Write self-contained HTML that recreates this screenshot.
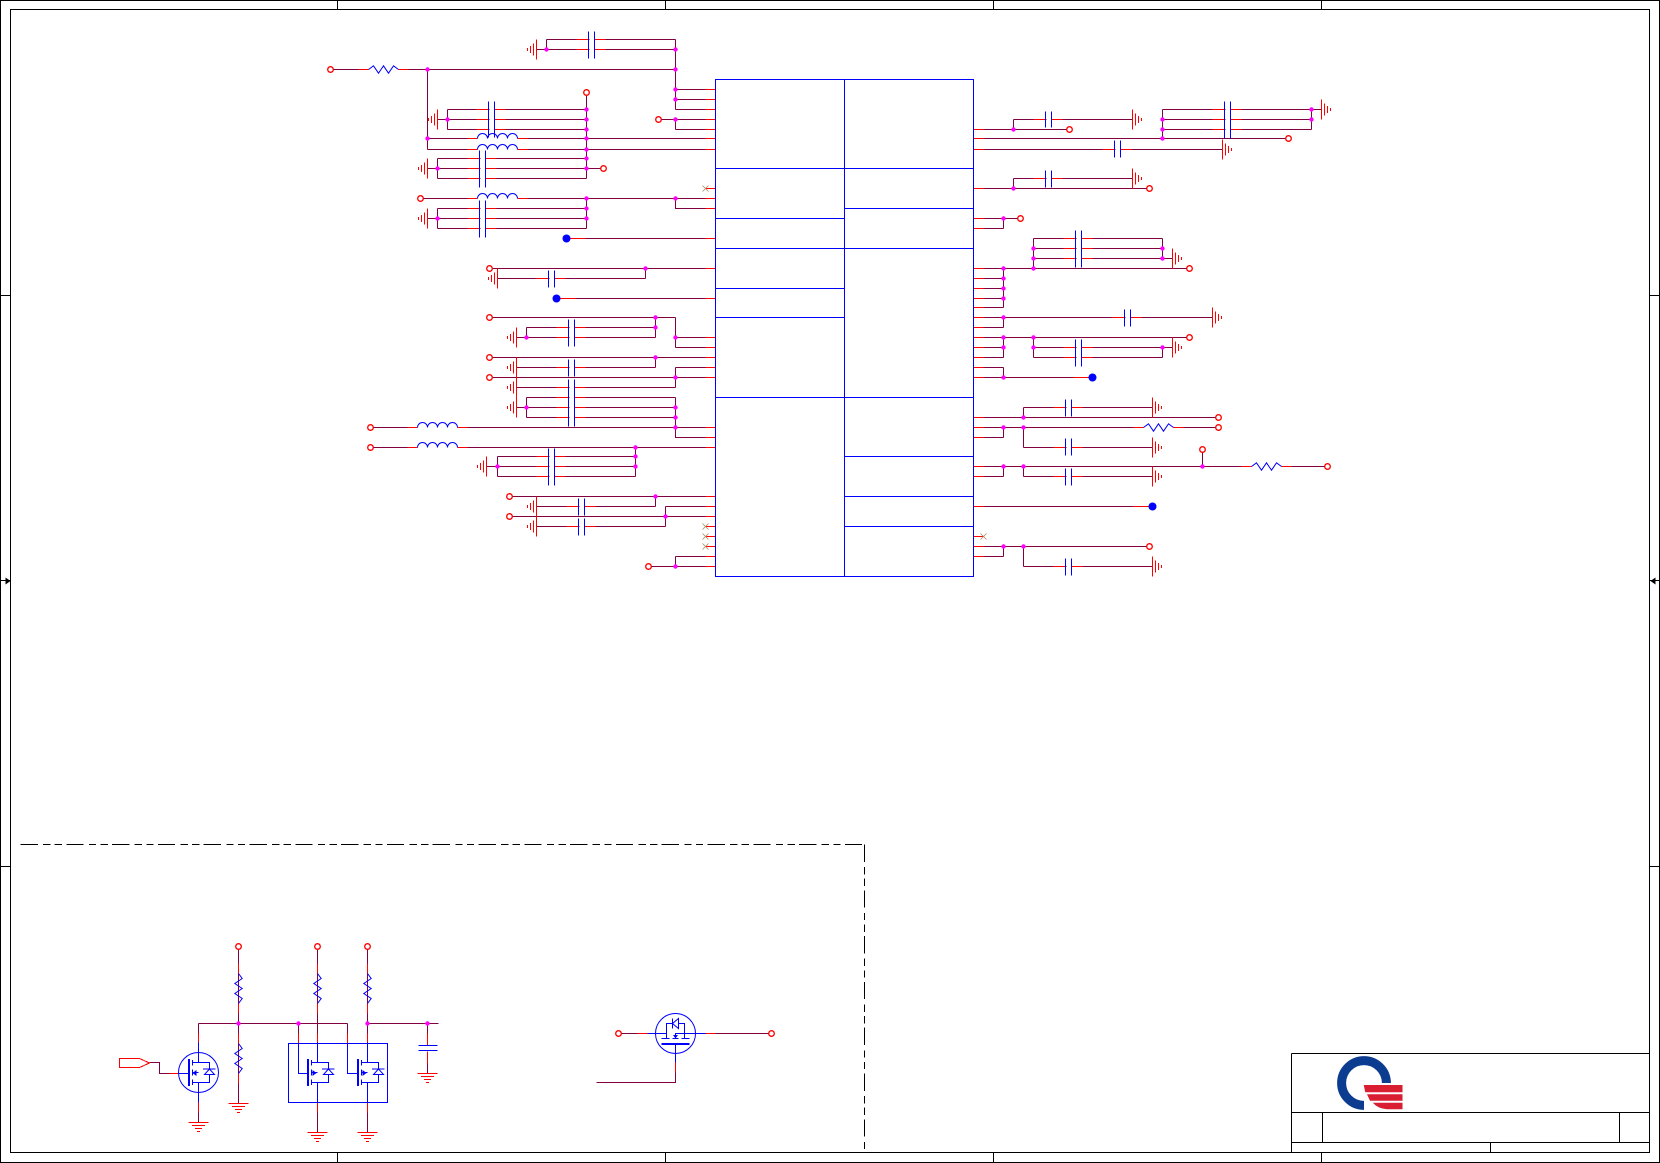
<!DOCTYPE html>
<html lang="en">
<head>
<meta charset="utf-8">
<title>Schematic</title>
<style>
html,body{margin:0;padding:0;background:#fff}
svg{display:block}
.k{fill:none;stroke:#000;stroke-width:1;shape-rendering:crispEdges}
.w{fill:none;stroke:#800040;stroke-width:1;shape-rendering:crispEdges}
.r{fill:none;stroke:#f00;stroke-width:1;shape-rendering:crispEdges}
.b{fill:none;stroke:#00f;stroke-width:1;shape-rendering:crispEdges}
.z{fill:none;stroke:#00f;stroke-width:1}
.x{fill:none;stroke:#b08a60;stroke-width:.8}
.p{fill:#fff;stroke:#f00;stroke-width:1.3}
.j{fill:#f0f}
.d{fill:#00f}
</style>
</head>
<body>
<svg xmlns="http://www.w3.org/2000/svg" width="1660" height="1163" viewBox="0 0 1660 1163">
<defs>
<path id="gl" class="r" d="M0-10V10M-3-6V6M-6-3.5V3.5M-9-1.5V1.5"/>
<path id="gr" class="r" d="M0-10V10M3-6V6M6-3.5V3.5M9-1.5V1.5"/>
<path id="gd" class="r" d="M-10 0H10M-6.5 3H6.5M-3.5 6H3.5M-1.5 9H1.5"/>
<path id="cs" class="r" d="M-12 0H0M6 0H17"/>
<circle id="o" class="p" r="2.8"/>
<circle id="n" class="j" r="2.2"/>
<circle id="bd" class="d" r="4"/>
<path id="xm" class="x" d="M-3-3L3 3M-3 3L3-3"/>
<path id="ind" class="z" d="M0 0a5 5 0 0 1 10 0a5 5 0 0 1 10 0a5 5 0 0 1 10 0a5 5 0 0 1 10 0"/>
<path id="rh" class="z" d="M0 0l5-3.7 5 7.4 5-7.4 5 7.4 5-7.4 5 3.7"/>
<path id="rv" class="z" d="M0 0l3.7 5-7.4 5 7.4 5-7.4 5 7.4 5-3.7 5"/>
<g id="mos">
<path class="b" d="M-6-12.5V-7M-6-3V3M-6 7V12.5M-6-10H0V-30M-6 10H0V30M-6 0H0M0-10H11V-3.5M11 2V10H0M4.5-3.5H17"/>
<path class="b" style="stroke-width:2" d="M-9.5-13.5V13.5"/>
<path class="z" d="M11-3.5L6 2H16Z"/>
</g>
</defs>

<g transform="translate(.5 .5)">
<!-- frame -->
<path class="k" d="M0 0H1659V1162H0ZM10 9H1649V1152H10Z"/>
<path class="k" d="M337 0V9M665 0V9M993 0V9M1321 0V9M337 1152V1162M665 1152V1162M993 1152V1162M1321 1152V1162M0 295H10M0 866H10M1649 295H1659M1649 866H1659M0 580H10M1649 580H1659"/>
<path d="M5 577L10 580.5L5 584ZM1655 577L1650 580.5L1655 584Z" fill="#000"/>
<!-- title block -->
<path class="k" d="M1291 1053H1649M1291 1053V1152M1291 1112H1649M1291 1142H1649M1322 1112V1142M1619 1112V1142M1490 1142V1152"/>
<!-- dashed box -->
<path class="k" stroke-dasharray="17.3 5.3 7.3 4.3 7.3 4.3" d="M20 844H864"/>
<path class="k" stroke-dasharray="17.3 5.3 7.3 4.3 7.3 4.3" d="M864 844V1152"/>

<!-- wires -->
<path class="w" d="M546 39V49M546 39H675M536 49H675M675 39V109M675 89H715M675 99H715M675 109H715M660 119H715M675 119V129M675 129H715
M333 69H368M398 69H675M427 69V149M427 138H477M517 138H715M427 149H477M517 149H715
M447 109V129M447 109H586M437 119H586M447 129H586M586 92V178M586 198V228
M437 158V178M437 158H586M427 168H601M437 178H586
M423 198H477M517 198H715M675 198V208H715
M437 208V228M437 208H586M427 218H586M437 228H586
M566 238H715M492 268H715M645 268V278M497 278H645M556 298H715
M492 317H675M675 317V347M675 337H715M675 347H715M526 327V337M526 327H655M516 337H655M655 317V337
M492 357H715M655 357V367M516 367H655
M492 377H715M675 367H715M675 367V387M516 387H675
M526 397V417M526 397H675M516 407H675M526 417H675M675 397V437H715
M373 427H417M457 427H715M373 447H417M457 447H715
M635 447V476M497 456V476M497 456H635M486 466H635M497 476H635
M512 496H715M655 496V506M536 506H655M512 516H715M665 506H715M665 506V526M536 526H665
M675 556H715M675 556V566M651 566H715

M973 129H1067M1013 119V129M1013 119H1132M973 138H1286M1162 109V138M1162 109H1311M1162 119H1311M1162 129H1311M1311 109V129M1311 109H1321
M973 149H1222M973 188H1146M1013 178V188M1013 178H1132
M973 218H1017M973 228H1003M1003 218V228
M973 268H1186M1003 268V307M973 278H1003M973 288H1003M973 298H1003M973 307H1003
M1033 238V268M1033 238H1162M1033 248H1162M1033 258H1172M1162 238V258
M973 317H1212M1003 317V327M973 327H1003
M973 337H1186M1003 337V357M973 347H1003M973 357H1003M1033 337V357M1033 347H1172M1033 357H1162M1162 347V357
M973 367H1003M1003 367V377M973 377H1092
M1023 407V417M1023 407H1152M973 417H1216
M973 427H1143M1173 427H1216M1003 427V437M973 437H1003M1023 427V447M1023 447H1152
M973 466H1251M1281 466H1325M1202 452V466M1003 466V476M973 476H1003M1023 466V476M1023 476H1152
M973 506H1152M973 546H1146M1003 546V556M973 556H1003M1023 546V566M1023 566H1152

M238 949V1103M317 949V1132M367 949V1132M198 1023H347M367 1023H438M198 1023V1043M298 1023V1043M347 1023V1043M427 1023V1045M427 1051V1073
M198 1102V1122M149 1062H159V1073H178
M621 1033H655M695 1033H769M675 1053V1082H596"/>

<!-- white gaps: between capacitor plates -->
<g fill="#fff" shape-rendering="crispEdges">
<rect x="589" y="31" width="5" height="27"/><rect x="489" y="101" width="5" height="35"/><rect x="480" y="150" width="5" height="37"/><rect x="480" y="200" width="5" height="37"/>
<rect x="549" y="270" width="5" height="17"/><rect x="569" y="319" width="5" height="27"/><rect x="569" y="359" width="5" height="17"/><rect x="569" y="379" width="5" height="47"/>
<rect x="549" y="448" width="5" height="37"/><rect x="579" y="498" width="5" height="17"/><rect x="579" y="518" width="5" height="17"/>
<rect x="1046" y="111" width="5" height="16"/><rect x="1225" y="101" width="5" height="35"/><rect x="1115" y="140" width="5" height="17"/><rect x="1046" y="170" width="5" height="17"/>
<rect x="1076" y="230" width="5" height="37"/><rect x="1125" y="309" width="5" height="17"/><rect x="1076" y="339" width="5" height="27"/><rect x="1066" y="399" width="5" height="17"/>
<rect x="1066" y="438" width="5" height="17"/><rect x="1066" y="468" width="5" height="17"/><rect x="1066" y="558" width="5" height="17"/>
<!-- bodies of mosfets / box -->
<rect x="180" y="1053" width="37" height="39"/>
<rect x="289" y="1044" width="97" height="57"/>
<rect x="657" y="1014" width="37" height="39"/>
</g>

<!-- red pin stubs -->
<path class="r" d="M705 89H715M705 99H715M705 109H715M705 119H715M705 129H715M705 138H715M705 149H715M705 188H715M705 198H715M705 208H715M705 238H715M705 268H715M705 298H715M705 337H715M705 347H715M705 357H715M705 367H715M705 377H715M705 427H715M705 437H715M705 447H715M705 496H715M705 506H715M705 516H715M705 526H715M705 536H715M705 546H715M705 556H715M705 566H715
M973 129H983M973 138H983M973 149H983M973 188H983M973 218H983M973 228H983M973 268H983M973 278H983M973 288H983M973 298H983M973 307H983M973 317H983M973 327H983M973 337H983M973 347H983M973 357H983M973 367H983M973 377H983M973 417H983M973 427H983M973 437H983M973 466H983M973 476H983M973 506H983M973 536H983M973 546H983M973 556H983
M358 69H368M398 69H408M467 138H477M517 138H527M467 149H477M517 149H527M467 198H477M517 198H527M407 427H417M457 427H467M407 447H417M457 447H467
M1133 427H1143M1173 427H1183M1241 466H1251M1281 466H1291
M570 238H585M560 298H575M1073 377H1088M1133 506H1148
M238 963V973M238 1003V1013M238 1033V1043M238 1073V1083M317 963V973M317 1003V1013M367 963V973M367 1003V1013M317 1033V1042M367 1033V1042M317 1102V1112M367 1102V1112M198 1033V1042M198 1102V1112M298 1033V1043M347 1033V1043M427 1033V1045M427 1051V1063M169 1073H178M637 1033H647M705 1033H715M675 1062V1072
M119 1058H139L149 1062.5L139 1067H119Z"/>

<!-- capacitor red leads -->
<use href="#cs" x="588" y="39"/><use href="#cs" x="588" y="49"/>
<use href="#cs" x="488" y="109"/><use href="#cs" x="488" y="119"/><use href="#cs" x="488" y="129"/>
<use href="#cs" x="479" y="158"/><use href="#cs" x="479" y="168"/><use href="#cs" x="479" y="178"/>
<use href="#cs" x="479" y="208"/><use href="#cs" x="479" y="218"/><use href="#cs" x="479" y="228"/>
<use href="#cs" x="548" y="278"/>
<use href="#cs" x="568" y="327"/><use href="#cs" x="568" y="337"/><use href="#cs" x="568" y="367"/>
<use href="#cs" x="568" y="387"/><use href="#cs" x="568" y="397"/><use href="#cs" x="568" y="407"/><use href="#cs" x="568" y="417"/>
<use href="#cs" x="548" y="456"/><use href="#cs" x="548" y="466"/><use href="#cs" x="548" y="476"/>
<use href="#cs" x="578" y="506"/><use href="#cs" x="578" y="526"/>
<use href="#cs" x="1045" y="119"/>
<use href="#cs" x="1224" y="109"/><use href="#cs" x="1224" y="119"/><use href="#cs" x="1224" y="129"/>
<use href="#cs" x="1114" y="149"/><use href="#cs" x="1045" y="178"/>
<use href="#cs" x="1075" y="238"/><use href="#cs" x="1075" y="248"/><use href="#cs" x="1075" y="258"/>
<use href="#cs" x="1124" y="317"/><use href="#cs" x="1075" y="347"/><use href="#cs" x="1075" y="357"/>
<use href="#cs" x="1065" y="407"/><use href="#cs" x="1065" y="447"/><use href="#cs" x="1065" y="476"/><use href="#cs" x="1065" y="566"/>

<!-- IC blocks -->
<path class="b" d="M715 79H973V576H715ZM844 79V576M715 168H973M715 218H844M715 248H973M715 288H844M715 317H844M715 397H973M844 208H973M844 456H973M844 496H973M844 526H973"/>

<!-- capacitor plates -->
<path class="b" d="M588 31V58M594 31V58M488 101V137M494 101V137M479 150V187M485 150V187M479 200V237M485 200V237M548 270V287M554 270V287M568 319V346M574 319V346M568 359V376M574 359V376M568 379V426M574 379V426M548 448V485M554 448V485M578 498V515M584 498V515M578 518V535M584 518V535
M1045 111V127M1051 111V127M1224 101V138M1230 101V138M1114 140V157M1120 140V157M1045 170V187M1051 170V187M1075 230V267M1081 230V267M1124 309V326M1130 309V326M1075 339V366M1081 339V366M1065 399V416M1071 399V416M1065 438V455M1071 438V455M1065 468V485M1071 468V485M1065 558V575M1071 558V575
M418 1045H437M418 1050H437"/>

<!-- inductors and resistors -->
<use href="#ind" x="477" y="138"/><use href="#ind" x="477" y="149"/><use href="#ind" x="477" y="198"/><use href="#ind" x="417" y="427"/><use href="#ind" x="417" y="447"/>
<use href="#rh" x="368" y="69"/><use href="#rh" x="1143" y="427"/><use href="#rh" x="1251" y="466"/>
<use href="#rv" x="238" y="973"/><use href="#rv" x="238" y="1043"/><use href="#rv" x="317" y="973"/><use href="#rv" x="367" y="973"/>

<!-- grounds -->
<use href="#gl" x="536" y="49"/><use href="#gl" x="437" y="119"/><use href="#gl" x="427" y="168"/><use href="#gl" x="427" y="218"/>
<use href="#gl" x="497" y="278"/><use href="#gl" x="516" y="337"/><use href="#gl" x="516" y="367"/><use href="#gl" x="516" y="387"/><use href="#gl" x="516" y="407"/>
<use href="#gl" x="486" y="466"/><use href="#gl" x="536" y="506"/><use href="#gl" x="536" y="526"/>
<use href="#gr" x="1132" y="119"/><use href="#gr" x="1321" y="109"/><use href="#gr" x="1222" y="149"/><use href="#gr" x="1132" y="178"/><use href="#gr" x="1172" y="258"/>
<use href="#gr" x="1212" y="317"/><use href="#gr" x="1172" y="347"/><use href="#gr" x="1152" y="407"/><use href="#gr" x="1152" y="447"/><use href="#gr" x="1152" y="476"/><use href="#gr" x="1152" y="566"/>
<use href="#gd" x="238" y="1103"/><use href="#gd" x="198" y="1122"/><use href="#gd" x="317" y="1132"/><use href="#gd" x="367" y="1132"/><use href="#gd" x="427" y="1073"/>

<!-- no-connect marks -->
<use href="#xm" x="705" y="188"/><use href="#xm" x="705" y="526"/><use href="#xm" x="705" y="536"/><use href="#xm" x="705" y="546"/><use href="#xm" x="983" y="536"/>

<!-- MOSFETs -->
<circle class="z" cx="198" cy="1072" r="20"/>
<use href="#mos" x="198" y="1072"/>
<path class="b" d="M178 1073H188"/>
<path class="d" d="M192 1072.5L196 1069.5V1075.5Z"/>
<use href="#mos" x="317" y="1072"/><use href="#mos" x="367" y="1072"/>
<path class="b" d="M298 1043V1073H308M347 1043V1073H358"/>
<path class="d" d="M316 1072.5L312 1069.5V1075.5ZM366 1072.5L362 1069.5V1075.5Z"/>
<path class="b" d="M288 1043H387V1102H288Z"/>

<circle class="z" cx="675" cy="1033" r="20"/>
<path class="b" d="M647 1033H666M684 1033H705M661 1038H669M672 1038H678M681 1038H689M666 1033V1038M684 1033V1038M666 1033V1023H672M684 1033V1023H678M675 1038V1033H684M675 1044V1062"/>
<path class="b" style="stroke-width:2" d="M661 1043.5H689"/>
<path class="z" d="M672 1018V1028M672 1023L678 1018V1028Z"/>
<path class="d" d="M675 1038L672.5 1034.5H677.5Z"/>

<!-- junctions -->
<use href="#n" x="546" y="49"/><use href="#n" x="675" y="49"/><use href="#n" x="675" y="69"/><use href="#n" x="675" y="89"/><use href="#n" x="675" y="99"/><use href="#n" x="675" y="119"/>
<use href="#n" x="427" y="69"/><use href="#n" x="427" y="138"/>
<use href="#n" x="447" y="119"/><use href="#n" x="586" y="109"/><use href="#n" x="586" y="119"/><use href="#n" x="586" y="129"/><use href="#n" x="586" y="138"/><use href="#n" x="586" y="149"/><use href="#n" x="586" y="158"/><use href="#n" x="586" y="168"/>
<use href="#n" x="437" y="168"/><use href="#n" x="586" y="198"/><use href="#n" x="586" y="208"/><use href="#n" x="586" y="218"/><use href="#n" x="437" y="218"/><use href="#n" x="675" y="198"/><use href="#n" x="645" y="268"/>
<use href="#n" x="655" y="317"/><use href="#n" x="655" y="327"/><use href="#n" x="526" y="337"/><use href="#n" x="675" y="337"/><use href="#n" x="655" y="357"/><use href="#n" x="675" y="377"/>
<use href="#n" x="526" y="407"/><use href="#n" x="675" y="407"/><use href="#n" x="675" y="417"/><use href="#n" x="675" y="427"/>
<use href="#n" x="635" y="447"/><use href="#n" x="635" y="456"/><use href="#n" x="635" y="466"/><use href="#n" x="497" y="466"/>
<use href="#n" x="655" y="496"/><use href="#n" x="665" y="516"/><use href="#n" x="675" y="566"/>
<use href="#n" x="1013" y="129"/><use href="#n" x="1162" y="119"/><use href="#n" x="1162" y="129"/><use href="#n" x="1162" y="138"/><use href="#n" x="1311" y="109"/><use href="#n" x="1311" y="119"/><use href="#n" x="1013" y="188"/><use href="#n" x="1003" y="218"/>
<use href="#n" x="1003" y="268"/><use href="#n" x="1033" y="268"/><use href="#n" x="1003" y="278"/><use href="#n" x="1003" y="288"/><use href="#n" x="1003" y="298"/><use href="#n" x="1033" y="248"/><use href="#n" x="1033" y="258"/><use href="#n" x="1162" y="248"/><use href="#n" x="1162" y="258"/>
<use href="#n" x="1003" y="317"/><use href="#n" x="1003" y="337"/><use href="#n" x="1033" y="337"/><use href="#n" x="1003" y="347"/><use href="#n" x="1033" y="347"/><use href="#n" x="1162" y="347"/><use href="#n" x="1003" y="377"/>
<use href="#n" x="1023" y="417"/><use href="#n" x="1003" y="427"/><use href="#n" x="1023" y="427"/><use href="#n" x="1003" y="466"/><use href="#n" x="1023" y="466"/><use href="#n" x="1202" y="466"/><use href="#n" x="1003" y="546"/><use href="#n" x="1023" y="546"/>
<use href="#n" x="238" y="1023"/><use href="#n" x="298" y="1023"/><use href="#n" x="367" y="1023"/><use href="#n" x="427" y="1023"/>

<!-- ports -->
<use href="#o" x="330" y="69"/><use href="#o" x="586" y="92"/><use href="#o" x="658" y="119"/><use href="#o" x="603" y="168"/><use href="#o" x="420" y="198"/><use href="#o" x="489" y="268"/>
<use href="#o" x="489" y="317"/><use href="#o" x="489" y="357"/><use href="#o" x="489" y="377"/><use href="#o" x="370" y="427"/><use href="#o" x="370" y="447"/><use href="#o" x="509" y="496"/><use href="#o" x="509" y="516"/><use href="#o" x="648" y="566"/>
<use href="#o" x="1069" y="129"/><use href="#o" x="1288" y="138"/><use href="#o" x="1149" y="188"/><use href="#o" x="1020" y="218"/><use href="#o" x="1189" y="268"/><use href="#o" x="1189" y="337"/>
<use href="#o" x="1218" y="417"/><use href="#o" x="1218" y="427"/><use href="#o" x="1202" y="449"/><use href="#o" x="1327" y="466"/><use href="#o" x="1149" y="546"/>
<use href="#o" x="238" y="946"/><use href="#o" x="317" y="946"/><use href="#o" x="367" y="946"/><use href="#o" x="618" y="1033"/><use href="#o" x="771" y="1033"/>

<!-- filled blue test points -->
<use href="#bd" x="566" y="238"/><use href="#bd" x="556" y="298"/><use href="#bd" x="1092" y="377"/><use href="#bd" x="1152" y="506"/>
</g>

<!-- logo -->
<path d="M1364 1105.4A22.4 22.4 0 1 1 1386.4 1083" fill="none" stroke="#0b3c8f" stroke-width="9"/>
<path fill="#d81e30" d="M1363.7 1085H1402.5V1092.3H1365.3ZM1367 1094.3H1402.5V1100.7H1370ZM1372.7 1102.7H1402.5V1109.3H1387Q1378 1108.5 1372.7 1102.7Z"/>
</svg>
</body>
</html>
